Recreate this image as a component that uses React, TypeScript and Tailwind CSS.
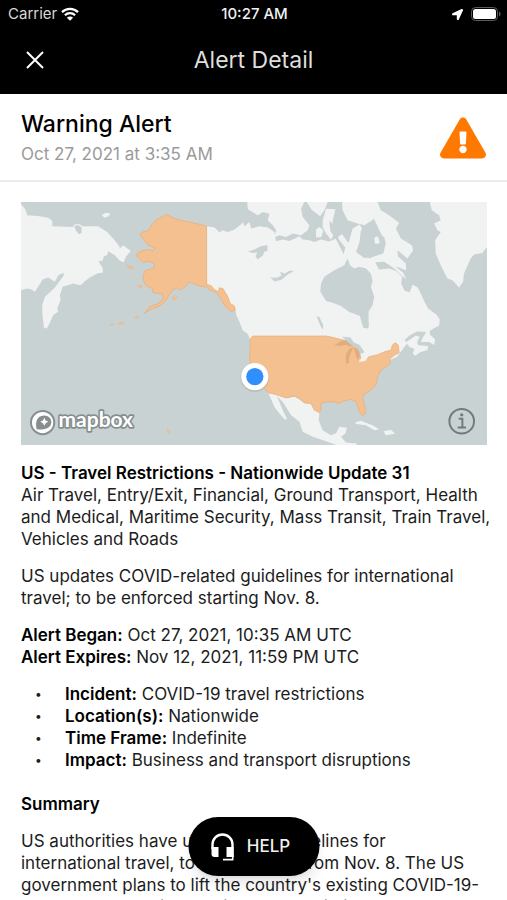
import { FaExclamationTriangle, FaLocationArrow } from "react-icons/fa";

const details = [
  { label: "Incident:", value: "COVID-19 travel restrictions" },
  { label: "Location(s):", value: "Nationwide" },
  { label: "Time Frame:", value: "Indefinite" },
  { label: "Impact:", value: "Business and transport disruptions" },
];

function WifiIcon() {
  return (
    <svg viewBox="0 0 18 14" className="h-3.5 w-[18px]" fill="none" stroke="#fff" strokeWidth="2.3">
      <path d="M1 5.2a11.5 11.5 0 0 1 16 0" />
      <path d="M3.9 8.3a7.3 7.3 0 0 1 10.2 0" />
      <path d="M9 13.8 5.9 10.7a4.4 4.4 0 0 1 6.2 0Z" fill="#fff" stroke="none" />
    </svg>
  );
}

function BatteryIcon() {
  return (
    <svg viewBox="0 0 30 14" className="h-3.5 w-[30px]">
      <rect x="0.5" y="0.5" width="26" height="13" rx="4" fill="none" stroke="#5c5c5c" />
      <rect x="2" y="2" width="23" height="10" rx="2.5" fill="#fff" />
      <path d="M28 4.5v5c1-.4 1.6-1.4 1.6-2.5S29 4.9 28 4.5Z" fill="#5c5c5c" />
    </svg>
  );
}

function StatusBar() {
  return (
    <div className="grid grid-cols-3 items-center pt-1 pr-1.5 pl-2 text-[15px] leading-5">
      <div className="flex items-center gap-1 text-[#d8d8d8]">
        Carrier
        <WifiIcon />
      </div>
      <div className="text-center font-medium text-[#f0f0f0]">10:27 AM</div>
      <div className="flex items-center justify-end gap-2">
        <FaLocationArrow className="size-[11px]" />
        <BatteryIcon />
      </div>
    </div>
  );
}

function HeadsetIcon() {
  return (
    <svg viewBox="0 0 24 28" className="h-7 w-6" fill="none" stroke="#fff" strokeWidth="2.4">
      <path d="M2 16v-4.5a10 10 0 0 1 20 0V24" />
      <path d="M1 14h7v10H4a3 3 0 0 1-3-3ZM16 14h7v10h-7Z" fill="#fff" stroke="none" />
      <path d="M22.2 22v4.6H12.500" strokeWidth="1.6" />
    </svg>
  );
}

function AlertMap() {
  return (
    <svg
      viewBox="3 5 1401 732"
      className="block w-full bg-[#c9d2d3]"
      role="img"
      aria-label="Map of North America with the United States highlighted"
    >
      <g fill="#f1f2f2">
        {/* Siberia */}
        <path d="M3 12 15 25 22 45 60 48 85 52 97 62V78L158 80 165 72H180L188 78 235 78 262 95 280 115 298 138 300 145 310 135 333 152 318 170 312 186 300 182 285 165 265 153 262 165 252 168 248 182 236 183 248 203 250 217 232 220 210 232 195 243 182 255 160 250 128 260 120 285 122 300 112 325 115 335 100 345 85 378 80 385 72 383 67 340V315L75 290 105 262 132 225 130 218 115 225 105 245 85 232 68 238 45 275 35 268 20 265 3 270Z" />
        <path d="m246 45 10-7 15 1-3 8-14 5Z" />
        {/* Canada */}
        <path d="m561 78 24 4 15 15 8-7 17 5 20-7 20-16 5-6 5 12 15-13 5 20 25-7 25 4 20 13 3 20 2 8 20-5 20 4 30-14 10 10 20 2 15 5 20-7 25 6 20-9 18-14 18 26 20-7 22 33 18 19 18 6 15 30 32-3 20 8 18 17-3 20 10 22 16 4 8-22 15 7 7 12 13 30 12 22 25 18 10 15-2 18-35 20-32-2-22 12-15 14 6 6 28-20 12 4-8 16 3 10 30 2-2 12-22 7-15 10-7-7 5-14-15-5-8-10-30 40-80 32-110-60H700L685 402 670 391 660 366 650 345 647 325 561 250Z" />
        {/* Arctic islands */}
        <path d="M683 5 685 27 715 45 730 35 750 40 745 60 760 75 770 90 764 112 780 105 800 110 820 100 845 105 865 90 870 75 850 50 845 25 855 5Z" />
        <path d="m862 5 15 23 25 20 13-18 10-25Z" />
        <path d="m920 25-10 35 0 20 10 20 15 18 10-18-5-38 8-35ZM890 88l10-8 12 10-6 20-16 2Z" />
        <path d="M968 5 970 30 985 60 1010 68 1035 75 1050 65 1070 85 1075 100 1095 110 1100 130 1092 160 1055 172 1056 187 1095 185 1125 205 1150 228 1161 238 1152 218 1128 198 1161 210 1160 190 1136 168 1135 150 1165 175 1182 150 1178 135 1145 115 1130 85 1140 68 1110 45 1085 30 1075 5Z" />
        <path d="m1000 85 20-12 8 10-2 40-20 27-15-2-3-20ZM990 170l15-5 25 28-10 8-20-12-12 4ZM1010 216l10-4 3 8-10 3ZM1064 112l12-4 6 20-14 4Z" />
        {/* Greenland */}
        <path d="M1232 5 1238 30 1260 45 1265 60 1245 70 1255 90 1265 95 1248 120 1250 160 1265 195 1285 235 1300 240 1320 262 1332 245 1335 220 1355 175 1365 163 1390 158 1404 140V5Z" />
        {/* Newfoundland */}
        <path d="m1222 376 10 2 0 25 16 15-3 17-15-9h-25l5-12 10-16Z" />
        {/* Mexico and the Caribbean */}
        <path d="M745 575 800 594 825 589 855 609 875 611 900 638 898 661 910 691 935 706 950 700 960 681 983 684 978 701 965 711 980 728 1010 731 1015 737H955L920 724 880 711 850 696 840 666 815 646 790 606 772 588 780 606 790 631 802 656 797 660 780 641 765 621 752 591Z" />
        <path d="m1008 668 17-5 35 13 20 12-15 3-25-15-32-4ZM1093 694l22-4 13 12-28 4Z" />
      </g>

      {/* Hudson Bay and inland water */}
      <g fill="#c9d2d3">
        <path d="m945 210 30-15 10-20 7 20 13 10 15-5 20 5 15 15 5 25-5 15 10 30-5 25-12 20v50l-16-2-10-35-32-12-25-18-25-10-20-5-17-28 2-25 10-20Z" />
        <path d="M1064 55 1040 75 1025 90 1020 130 1010 155 1035 173 1060 170 1088 158 1085 140 1060 125 1070 105 1090 110ZM930 62l20 15 8 40 20 25-5 20-20-40-20-30Z" />
        <path d="m163 78 10-4 12 6v18l-8 4-8-10Z" />
        <path d="m685 154 20-6 20-11 19-2v17l-9 2-5 12-15 12-7-9 5-12-12 1Z" />
        <path d="m752 232 20 1 14-6-4-12 14 5 14-8h14l-20 12-18 15-20 5Z" />
        <path d="m892 349 8 2 12 26-2 12-8-15ZM1025 366h22l2 12-10 3Z" />
      </g>

      {/* United States */}
      <g fill="#f4c08f" stroke="#e9ab74" strokeWidth="2">
        <path d="M440 42 458 52 480 60 510 65 540 72 561 78V252L575 257 585 268 595 275 600 263 610 265 625 290 632 310 645 318 647 330 635 335 620 322 610 308 600 290 590 278 572 270 558 260 540 258 520 250 510 245 502 255 490 265 478 270 470 262 455 275 445 290 435 305 420 318 400 325 375 338 372 342 390 320 420 308 430 295 428 282 400 278 398 265 380 258 370 240V228L375 212 390 207 405 200 402 190 385 183 370 187 355 172 348 163 365 152 385 148 400 152 405 143 385 135 375 122 360 103 368 95 385 92 395 75 410 58 430 48Z" />
        <path d="M692 416 700 408H920L940 412 975 421 995 431 1020 446 1025 481 1045 471 1075 464 1100 454 1115 451 1120 434 1130 428 1137 436 1140 458 1125 466 1112 476 1113 491 1100 501 1085 511 1075 531 1070 556 1050 574 1033 584 1030 596 1038 621V641L1030 648 1020 634 1010 606 995 598 970 604 960 611 945 606 920 606 905 611 905 628 900 638 885 631 875 611 855 609 840 594 825 589 800 594 770 584 748 579 735 566 720 546 695 511 690 476 692 441Z" />
        <path d="m455 294 12-8 6 4-10 12ZM344 352l14-4-4 7ZM354 259l10-5 5 5-9 4ZM320 196l18 4 4 8-14-4ZM268 374l12-3 0 4ZM292 371l12-5 8 4-14 3ZM443 688l8 7-6 7Z" strokeWidth="1" />
      </g>
      {/* Great Lakes */}
      <path
        d="M945 436 966 423 990 418 1006 432 992 440 980 434 962 438ZM980 491 979 465 990 446 1003 441 996 457 990 472 989 489ZM1003 441 1018 450 1022 470 1014 479 1009 464Z"
        fill="#dfad7f"
      />
      <path d="m968 410 25 2 10 15 18 8 15 22-12 5-10-18-18-10-15-12Z" fill="#c9d2d3" />
      <path d="m1018 486 12-18 20-2-12 17Z" fill="#f1f2f2" />

      {/* Current location */}
      <circle cx="706" cy="533" r="43" fill="#87918f" opacity=".3" />
      <circle cx="706" cy="530" r="41" fill="#fff" />
      <circle cx="706" cy="530" r="26" fill="#318ffb" />

      {/* Mapbox attribution */}
      <circle cx="68" cy="668" r="35" fill="#fff" stroke="#868e8f" strokeWidth="6" />
      <path d="M50 688c-5-20 0-40 22-41 14 0 22 9 22 20 0 19-22 24-44 21Z" fill="#868e8f" />
      <path d="m73 654 4 8 8 4-8 4-4 8-4-8-8-4 8-4Z" fill="#fff" />
      <text
        x="116"
        y="683"
        fontSize="63"
        fill="#fff"
        stroke="#868e8f"
        strokeWidth="10"
        strokeLinejoin="round"
        paintOrder="stroke"
        className="font-['Lato',sans-serif] font-bold"
      >
        mapbox
      </text>
      <g fill="none" stroke="#727a7c" strokeWidth="6">
        <circle cx="1328" cy="664" r="37" />
        <path d="M1319 657h11v26M1316 683h25" />
        <circle cx="1328" cy="645" r="5" fill="#727a7c" stroke="none" />
      </g>
    </svg>
  );
}

export default function App() {
  return (
    <div className="relative flex h-screen flex-col overflow-hidden bg-white font-['Inter','Liberation_Sans',sans-serif] text-[#1c1c1c]">
      <header className="shrink-0 bg-black pb-3.5 text-white">
        <StatusBar />
        <div className="grid grid-cols-[1fr_auto_1fr] items-center px-5 pt-4">
          <button type="button" aria-label="Close" className="flex size-[30px] items-center justify-center">
            <svg viewBox="0 0 18 18" className="size-[18px]" stroke="#fff" strokeWidth="2">
              <path d="m1 1 16 16M17 1 1 17" />
            </svg>
          </button>
          <h1 className="text-[23px] leading-10 text-[#dedede]">Alert Detail</h1>
        </div>
      </header>

      <section className="flex shrink-0 items-center justify-between border-b-2 border-[#ececec] px-[21px] pt-3 pb-3.5">
        <div>
          <h2 className="text-[23px] leading-9 font-medium text-black">Warning Alert</h2>
          <p className="text-[17px] leading-6 text-[#9a9a9a]">Oct 27, 2021 at 3:35 AM</p>
        </div>
        <FaExclamationTriangle className="mt-1 size-[46px] text-[#ff7900]" />
      </section>

      <main className="min-h-0 flex-1 overflow-y-auto pt-5 pr-3 pl-[21px] text-[17px] leading-[22px] [scrollbar-width:none]">
        <div className="pr-2">
          <AlertMap />
        </div>
        <h3 className="mt-[17px] font-semibold text-black">US - Travel Restrictions - Nationwide Update 31</h3>
        <p>
          Air Travel, Entry/Exit, Financial, Ground Transport, Health and Medical, Maritime Security, Mass Transit,
          Train Travel, Vehicles and Roads
        </p>
        <p className="mt-[15px]">
          US updates COVID-related guidelines for international travel; to be enforced starting Nov. 8.
        </p>
        <p className="mt-[15px]">
          <strong className="font-semibold text-black">Alert Began:</strong> Oct 27, 2021, 10:35 AM UTC
          <br />
          <strong className="font-semibold text-black">Alert Expires:</strong> Nov 12, 2021, 11:59 PM UTC
        </p>
        <ul className="mt-[15px]">
          {details.map((item) => (
            <li key={item.label} className="flex">
              <span className="w-11 pl-3.5 text-xs leading-[22px]">•</span>
              <span>
                <strong className="font-semibold text-black">{item.label}</strong> {item.value}
              </span>
            </li>
          ))}
        </ul>
        <h3 className="mt-[22px] font-semibold text-black">Summary</h3>
        <p className="mt-[15px]">
          US authorities have updated its guidelines for
          <br />
          international travel, to be enforced from Nov. 8. The US
          <br />
          government plans to lift the country's existing COVID-19-
          <br />
          related bans and instead impose restrictions based on vaccination status.
        </p>
      </main>

      <button
        type="button"
        className="absolute bottom-6 left-1/2 flex h-[59px] w-[131px] -translate-x-1/2 items-center justify-center gap-3 rounded-full bg-black pr-1.5 text-[17px] font-medium text-[#f0f0f0] shadow-lg"
      >
        <HeadsetIcon />
        HELP
      </button>
    </div>
  );
}
